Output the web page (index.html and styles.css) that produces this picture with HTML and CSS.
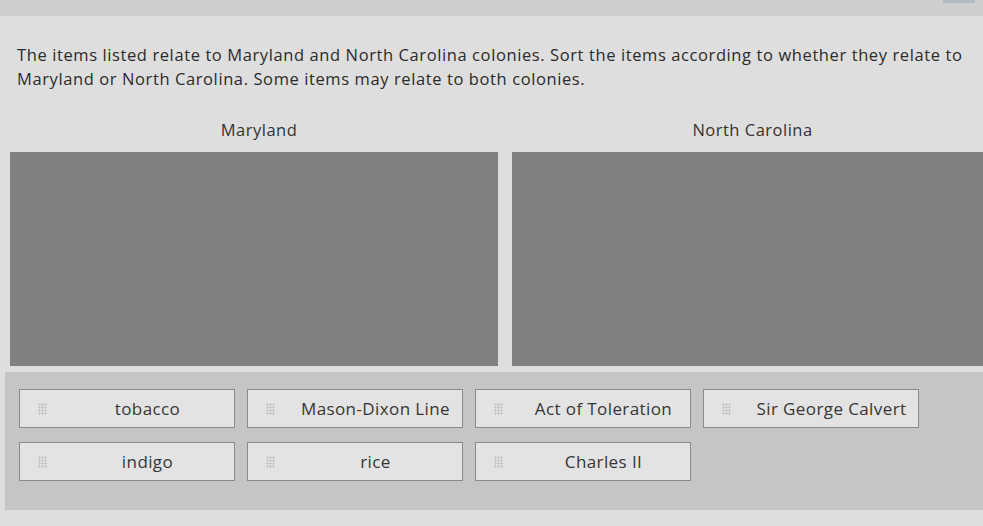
FILE: index.html
```html
<!DOCTYPE html>
<html lang="en">
<head>
  <meta charset="UTF-8">
  <meta name="viewport" content="width=device-width, initial-scale=1.0">
  <title>Sort the items</title>
  <link rel="stylesheet" href="styles.css">
</head>
<body>
  <div class="topbar">
    <span class="tab-line"></span>
  </div>
  <div class="question">
    <p class="prompt">The items listed relate to Maryland and North Carolina colonies. Sort the items according to whether they relate to Maryland or North Carolina. Some items may relate to both colonies.</p>

    <div class="zones">
      <div class="zone">
        <h3 class="zone-title">Maryland</h3>
        <div class="drop"></div>
      </div>
      <div class="zone">
        <h3 class="zone-title">North Carolina</h3>
        <div class="drop"></div>
      </div>
    </div>

    <div class="tray">
      <div class="item"><span class="handle"></span><span class="label">tobacco</span></div>
      <div class="item"><span class="handle"></span><span class="label">Mason-Dixon Line</span></div>
      <div class="item"><span class="handle"></span><span class="label">Act of Toleration</span></div>
      <div class="item"><span class="handle"></span><span class="label">Sir George Calvert</span></div>
      <div class="item"><span class="handle"></span><span class="label">indigo</span></div>
      <div class="item"><span class="handle"></span><span class="label">rice</span></div>
      <div class="item"><span class="handle"></span><span class="label">Charles II</span></div>
    </div>
  </div>
</body>
</html>
```

FILE: styles.css
```css
* {
  margin: 0;
  padding: 0;
  box-sizing: border-box;
}

body {
  font-family: "Open Sans", Lato, sans-serif;
  background: #dedede;
  color: #333;
  overflow: hidden;
}

.topbar {
  height: 16px;
  background: #cecece;
  display: flex;
  justify-content: flex-end;
  padding-right: 8px;
}

.topbar .tab-line {
  width: 32px;
  height: 3px;
  background: #aebcc4;
}

.question {
  padding-top: 27px;
}

.prompt {
  padding: 0 17px;
  font-size: 16.5px;
  letter-spacing: 0.6px;
  line-height: 24px;
  color: #2b2b2b;
}

.zones {
  display: grid;
  grid-template-columns: 488px 1fr;
  column-gap: 14px;
  padding-left: 10px;
  margin-top: 29px;
}

.zone-title {
  font-size: 16.5px;
  font-weight: 400;
  letter-spacing: 0.5px;
  text-align: center;
  color: #333;
  height: 32px;
  line-height: 20px;
  padding-left: 10px;
}

.drop {
  height: 214px;
  background: #808080;
}

.tray {
  margin: 6px 0 0 5px;
  height: 138px;
  background: #c5c5c5;
  padding: 17px 0 0 14px;
  display: grid;
  grid-template-columns: repeat(4, 216px);
  grid-auto-rows: 39px;
  gap: 14px 12px;
}

.item {
  display: flex;
  align-items: center;
  background: #e3e3e3;
  border: 1px solid #8a8a8a;
  color: #363636;
  font-size: 17px;
  letter-spacing: 0.4px;
}

.handle {
  width: 9px;
  height: 12px;
  margin-left: 18px;
  background-image: radial-gradient(circle, #c9c9c9 1px, transparent 1.2px);
  background-size: 3px 3px;
}

.label {
  flex: 1;
  text-align: center;
  padding-left: 14px;
}
```
